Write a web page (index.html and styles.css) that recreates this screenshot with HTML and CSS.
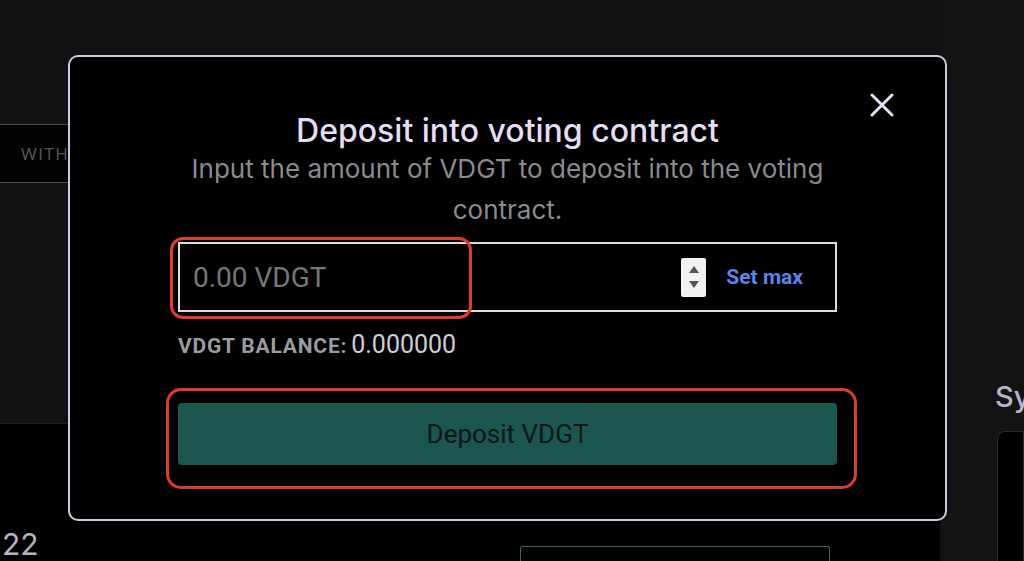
FILE: index.html
```html
<!DOCTYPE html>
<html lang="en">
<head>
  <meta charset="UTF-8">
  <meta name="viewport" content="width=device-width, initial-scale=1.0">
  <title>Deposit into voting contract</title>
  <link rel="stylesheet" href="styles.css">
</head>
<body>

<div class="page">
  <div class="main">
    <div class="main-top"></div>
    <div class="tabs">
      <span class="tab">WITHDRAW</span>
    </div>
    <div class="main-mid"></div>
    <div class="main-card">
      <div class="year">22</div>
      <div class="card-row">
        <div class="teal-box"></div>
      </div>
    </div>
  </div>
  <div class="side">
    <h3 class="side-title">Sync</h3>
    <div class="side-box"></div>
  </div>
</div>

<div class="modal">
  <button class="close-button" aria-label="Close">
    <svg width="24" height="24" viewBox="0 0 24 24">
      <path d="M2 2 L22 22 M22 2 L2 22" stroke="#e6def4" stroke-width="3" stroke-linecap="round" fill="none"/>
    </svg>
  </button>
  <h2 class="modal-title">Deposit into voting contract</h2>
  <p class="modal-text">Input the amount of VDGT to deposit into the voting contract.</p>

  <div class="amount-field">
    <input type="text" class="amount-input" placeholder="0.00 VDGT">
    <div class="spinner">
      <span class="arrow up"></span>
      <span class="arrow down"></span>
    </div>
    <button class="set-max">Set max</button>
    <div class="highlight highlight-input"></div>
  </div>

  <div class="balance">
    <span class="balance-label">VDGT BALANCE:</span>
    <span class="balance-value">0.000000</span>
  </div>

  <div class="deposit-wrap">
    <button class="deposit-button">Deposit VDGT</button>
    <div class="highlight highlight-button"></div>
  </div>
</div>

</body>
</html>
```

FILE: styles.css
```css
body {
    margin: 0;
    padding: 0;
    width: 1024px;
    height: 561px;
    overflow: hidden;
    position: relative;
    background-color: #121114;
    font-family: Inter, 'Noto Sans', sans-serif;
}

.page {
    display: grid;
    grid-template-columns: 940px 1fr;
    height: 561px;
    overflow: hidden;
}

/* page behind the modal */
.main {
    display: flex;
    flex-direction: column;
    overflow: hidden;
}

.main-top {
    height: 124px;
}

.tabs {
    height: 57px;
    background-color: #020203;
    border-top: 1px solid #4a4a4e;
    border-bottom: 1px solid #4a4a4e;
    display: flex;
    align-items: center;
    padding-left: 21px;
}

.tab {
    font-family: 'Open Sans', sans-serif;
    font-size: 17px;
    letter-spacing: 1.5px;
    color: #58585c;
}

.main-mid {
    height: 240px;
    background-color: #111113;
    border-bottom: 1px solid #1f1f22;
}

.main-card {
    flex: 1;
    background-color: #000000;
    padding-top: 100px;
    position: relative;
    overflow: hidden;
}

.year {
    padding-left: 2px;
    font-size: 30px;
    color: #b7b3c2;
    line-height: 40px;
}

.card-row {
    position: absolute;
    left: 520px;
    top: 122px;
}

.teal-box {
    width: 308px;
    height: 20px;
    border: 1px solid #3b6a5f;
    border-bottom: none;
    border-radius: 3px 3px 0 0;
}

.side {
    background-color: #131314;
    padding-left: 55px;
    padding-top: 379px;
    overflow: hidden;
}

.side-title {
    margin: 0 0 16px 0;
    font-size: 29px;
    font-weight: 500;
    color: #b9b5c6;
    white-space: nowrap;
    line-height: 36px;
}

.side-box {
    height: 130px;
    margin-left: 2px;
    background-color: #000;
    border: 1px solid #2c2c2e;
    border-bottom: none;
    border-radius: 8px 0 0 0;
}

/* modal */
.modal {
    position: absolute;
    left: 68px;
    top: 55px;
    width: 879px;
    height: 466px;
    box-sizing: border-box;
    background-color: #000;
    border: 2px solid #cfc9de;
    border-radius: 10px;
    padding: 57px 108px 0 108px;
    display: flex;
    flex-direction: column;
    align-items: center;
}

.close-button {
    position: absolute;
    right: 51px;
    top: 36px;
    background: none;
    border: none;
    padding: 0;
    cursor: pointer;
    width: 24px;
    height: 24px;
}

.modal-title {
    margin: 0;
    font-size: 32px;
    font-weight: 500;
    line-height: 34px;
    color: #e6ddf4;
    text-align: center;
    white-space: nowrap;
}

.modal-text {
    margin: 0;
    width: 659px;
    font-size: 26px;
    line-height: 41px;
    color: #8b8a90;
    text-align: center;
}

.amount-field {
    position: relative;
    margin-top: 12px;
    width: 659px;
    height: 70px;
    box-sizing: border-box;
    border: 2px solid #dcdcdc;
    display: flex;
    align-items: center;
    padding: 0 32px 0 13px;
}

.amount-input {
    flex: 1;
    min-width: 0;
    background: transparent;
    border: none;
    outline: none;
    font-family: Roboto, 'Liberation Sans', sans-serif;
    font-size: 28px;
    color: #ddd;
    padding: 0;
}

.amount-input::placeholder {
    color: #77767a;
}

.spinner {
    width: 25px;
    height: 39px;
    background-color: #f1f1f1;
    border-radius: 2px;
    display: flex;
    flex-direction: column;
    align-items: center;
    justify-content: space-around;
    margin-right: 20px;
    padding: 4px 0;
    box-sizing: border-box;
}

.arrow {
    width: 0;
    height: 0;
    border-left: 5px solid transparent;
    border-right: 5px solid transparent;
}

.arrow.up {
    border-bottom: 7px solid #555;
}

.arrow.down {
    border-top: 7px solid #555;
}

.set-max {
    background: none;
    border: none;
    padding: 0;
    font-family: Roboto, 'Liberation Sans', sans-serif;
    font-size: 21px;
    font-weight: 700;
    color: #5d84e8;
    cursor: pointer;
}

.balance {
    align-self: flex-start;
    margin-top: 20px;
    font-family: Roboto, 'Liberation Sans', sans-serif;
    line-height: 26px;
}

.balance-label {
    font-size: 21px;
    font-weight: 700;
    color: #9c9ba0;
    letter-spacing: 0.8px;
}

.balance-value {
    font-size: 25px;
    color: #cfcdd6;
}

.deposit-wrap {
    position: relative;
    margin-top: 42px;
    width: 659px;
}

.deposit-button {
    display: block;
    width: 100%;
    height: 62px;
    border: none;
    border-radius: 4px;
    background-color: #1b574e;
    color: #0c1614;
    font-family: Roboto, 'Liberation Sans', sans-serif;
    font-size: 26px;
    cursor: pointer;
}

/* red annotation outlines */
.highlight {
    position: absolute;
    border: 3px solid #e23b2b;
    pointer-events: none;
    box-sizing: border-box;
}

.highlight-input {
    left: -10px;
    top: -7px;
    width: 302px;
    height: 82px;
    border-radius: 13px;
}

.highlight-button {
    left: -12px;
    top: -15px;
    width: 691px;
    height: 101px;
    border-radius: 15px;
}
```
